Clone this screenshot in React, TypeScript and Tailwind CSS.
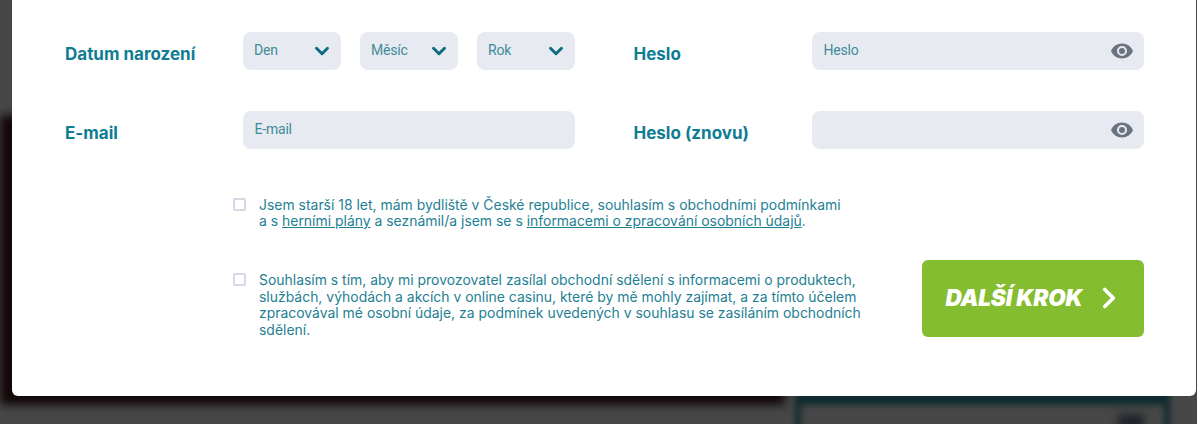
import { ChevronDown, ChevronRight } from 'lucide-react'

const inputFont = "font-['Roboto',sans-serif] text-[14px] tracking-[-0.2px] text-[#3f8a9b]"
const labelClass = "font-['Inter',sans-serif] text-[17px] font-bold text-[#0e7c92]"
const textClass = "font-['Inter',sans-serif] text-[13.95px] leading-[16.4px] text-[#1f7f93]"

function Eye() {
  return (
    <svg viewBox="0 0 24 24" className="w-[24px] h-[24px] shrink-0" fill="#6b7280">
      <path d="M12 4.5C7 4.5 2.7 7.6 1 12c1.7 4.4 6 7.5 11 7.5s9.3-3.1 11-7.5c-1.7-4.4-6-7.5-11-7.5zM12 17a5 5 0 1 1 0-10 5 5 0 0 1 0 10zm0-8a3 3 0 1 0 0 6 3 3 0 0 0 0-6z" />
    </svg>
  )
}

function DateSelect({ label }: { label: string }) {
  return (
    <div className="w-[98.5px] h-[37.5px] pl-[11.5px] pr-[8px] rounded-[8px] bg-[#e7eaf0] flex items-center justify-between">
      <span className={inputFont}>{label}</span>
      <ChevronDown className="w-[22px] h-[22px] text-[#0d6c80]" strokeWidth={3.2} />
    </div>
  )
}

function TextField({ placeholder, eye }: { placeholder?: string; eye?: boolean }) {
  return (
    <div className="w-[332.5px] h-[37.5px] pl-[12px] pr-[10px] rounded-[8px] bg-[#e7eaf0] flex items-center justify-between">
      <span className={inputFont}>{placeholder}</span>
      {eye && <Eye />}
    </div>
  )
}

function Checkbox() {
  return <span className="block w-[13px] h-[13px] rounded-[2px] border-2 border-[#d5d8e6] bg-white shrink-0" />
}

export default function App() {
  return (
    <div className="relative w-[1197px] h-[424px] overflow-hidden bg-[#474747]">
      {/* blurred page behind the modal */}
      <div className="absolute left-0 top-[115px] w-[785px] h-[290px] bg-[#120708] blur-[5px]" />
      <div className="absolute left-[795px] top-[380px] w-[375px] h-[70px] border-x-[6px] border-t-[25px] border-[#0f2b2f] blur-[3px]" />
      <div className="absolute left-[1118px] top-[414px] w-[26px] h-[16px] bg-[#20252b] blur-[4px]" />

      <div className="relative ml-[11.5px] w-[1184.5px] h-[396px] bg-white rounded-b-[6px] pl-[53.5px] pr-[52px] pt-[32px]">
        <div className="grid grid-cols-[177.5px_332.5px] gap-y-[41.5px] float-left">
          <div className={`${labelClass} pt-[10px]`}>Datum narození</div>
          <div className="flex justify-between">
            <DateSelect label="Den" />
            <DateSelect label="Měsíc" />
            <DateSelect label="Rok" />
          </div>
          <div className={`${labelClass} pt-[10px]`}>E-mail</div>
          <TextField placeholder="E-mail" />
        </div>

        <div className="grid grid-cols-[178px_332.5px] gap-y-[41.5px] float-right">
          <div className={`${labelClass} pt-[10px]`}>Heslo</div>
          <TextField placeholder="Heslo" eye />
          <div className={`${labelClass} pt-[10px]`}>Heslo (znovu)</div>
          <TextField eye />
        </div>

        <div className="clear-both pt-[48px] pl-[168px] flex items-start justify-between">
          <div className="w-[640px]">
            <div className="flex gap-[13px]">
              <span className="pt-[1px]"><Checkbox /></span>
              <p className={textClass}>
                Jsem starší 18 let, mám bydliště v České republice, souhlasím s obchodními podmínkami
                <br />
                a s <span className="underline">herními plány</span> a seznámil/a jsem se s{' '}
                <span className="underline">informacemi o zpracování osobních údajů</span>.
              </p>
            </div>
            <div className="flex gap-[13px] mt-[43px]">
              <span className="pt-[1px]"><Checkbox /></span>
              <p className={textClass}>
                Souhlasím s tím, aby mi provozovatel zasílal obchodní sdělení s informacemi o produktech,
                <br />
                službách, výhodách a akcích v online casinu, které by mě mohly zajímat, a za tímto účelem
                <br />
                zpracovával mé osobní údaje, za podmínek uvedených v souhlasu se zasíláním obchodních
                <br />
                sdělení.
              </p>
            </div>
          </div>
          <button className="mt-[63px] w-[222.5px] h-[77px] rounded-[6px] bg-[#84bd2f] flex items-center pl-[24px] text-white">
            <span className="font-['Inter',sans-serif] text-[22.6px] font-black italic tracking-[-0.2px]">DALŠÍ KROK</span>
            <ChevronRight className="w-[34px] h-[34px] ml-[9px]" strokeWidth={2.6} />
          </button>
        </div>
      </div>
    </div>
  )
}
